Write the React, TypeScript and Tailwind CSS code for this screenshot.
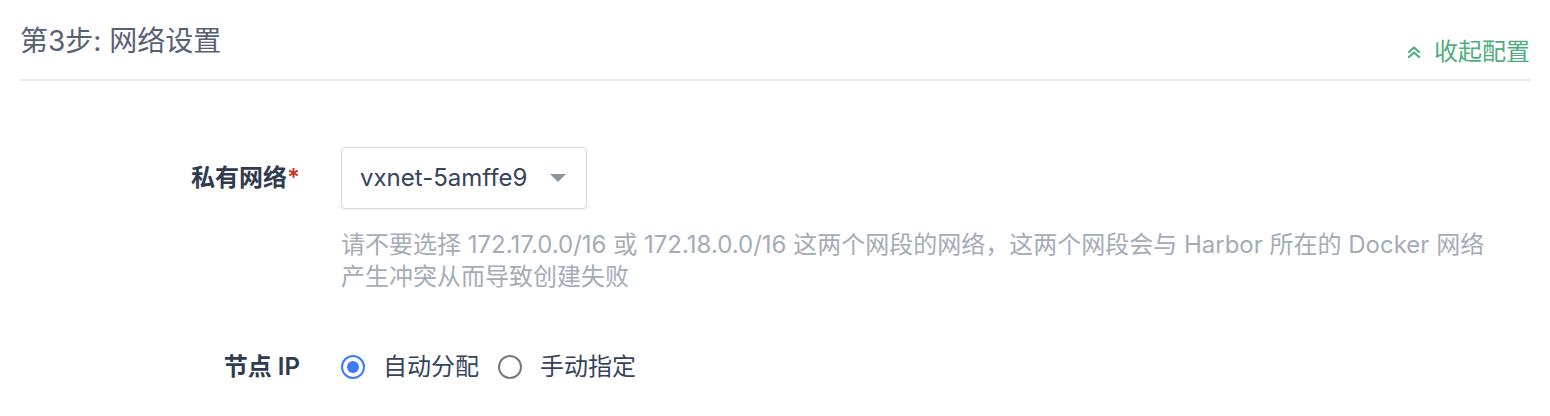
import { useState } from 'react';

const font = { fontFamily: '"Inter", "Noto Sans CJK SC", sans-serif' };

function Radio({ checked, label, onClick }: { checked: boolean; label: string; onClick: () => void }) {
  return (
    <button onClick={onClick} className="flex items-center gap-[18px]">
      {checked ? (
        <span className="flex h-[24px] w-[24px] shrink-0 items-center justify-center rounded-full border-[2px] border-[#3b7cf6] bg-white">
          <span className="h-[12px] w-[12px] rounded-full bg-[#3b7cf6]" />
        </span>
      ) : (
        <span className="h-[24px] w-[24px] shrink-0 rounded-full border-[2px] border-[#777b80] bg-white" />
      )}
      <span className="text-[24px] leading-[32px] text-[#36435c]">{label}</span>
    </button>
  );
}

export default function App() {
  const [mode, setMode] = useState<'auto' | 'manual'>('auto');

  return (
    <div className="h-[416px] w-[1550px] bg-white px-[20px]" style={font}>
      {/* Header */}
      <div className="flex justify-between border-b-2 border-[#e6ebf0] pb-[11px] pt-[22px]">
        <h2 className="text-[28px] font-normal leading-[38px] text-[#576173]">第3步: 网络设置</h2>
        <button className="mt-[14px] flex items-center gap-[13px] text-[24px] leading-[32px] text-[#4dad7c]">
          <svg width="14" height="12" viewBox="0 0 14 12" fill="none" stroke="currentColor" strokeWidth="2.2" strokeLinecap="round" strokeLinejoin="round">
            <path d="M2 6 L7 1.5 L12 6" />
            <path d="M2 11 L7 6.5 L12 11" />
          </svg>
          <span>收起配置</span>
        </button>
      </div>

      {/* VxNet */}
      <div className="mt-[66px] flex items-center gap-[41px]">
        <label className="w-[280px] text-right text-[24px] font-semibold leading-[32px] text-[#2f3b50]">
          私有网络<span className="text-[#c8372d]">*</span>
        </label>
        <div className="flex h-[62px] w-[246px] items-center justify-between rounded-[4px] border border-[#d6dce5] bg-white pl-[18px] pr-[20px] shadow-[0_1px_2px_rgba(0,0,0,0.06)]">
          <span className="text-[24px] leading-[32px] text-[#36435c]">vxnet-5amffe9</span>
          <svg width="16" height="8" viewBox="0 0 16 8">
            <path d="M0 0 L16 0 L8 8 Z" fill="#8b94a1" />
          </svg>
        </div>
      </div>
      <p className="ml-[321px] mt-[20px] whitespace-nowrap text-[24px] leading-[32px] text-[#a3acb9]">
        请不要选择 172.17.0.0/16 或 172.18.0.0/16 这两个网段的网络，这两个网段会与 Harbor 所在的 Docker 网络
        <br />
        产生冲突从而导致创建失败
      </p>

      {/* Node IP */}
      <div className="mt-[58px] flex items-center gap-[41px]">
        <label className="w-[280px] text-right text-[24px] font-semibold leading-[32px] text-[#2f3b50]">节点 IP</label>
        <div className="flex items-center gap-[19px]">
          <Radio checked={mode === 'auto'} label="自动分配" onClick={() => setMode('auto')} />
          <Radio checked={mode === 'manual'} label="手动指定" onClick={() => setMode('manual')} />
        </div>
      </div>
    </div>
  );
}
